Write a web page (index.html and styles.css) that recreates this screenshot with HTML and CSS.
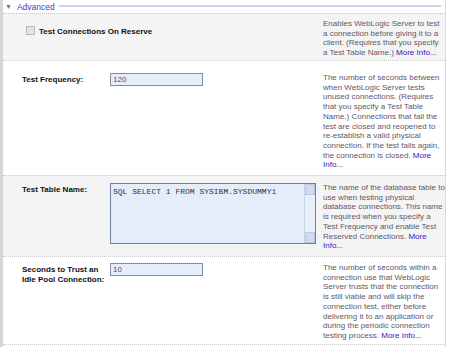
FILE: index.html
```html
<!DOCTYPE html>
<html lang="en">
<head>
  <meta charset="UTF-8">
  <title>Advanced</title>
  <link rel="stylesheet" href="styles.css">
</head>
<body>

  <div class="panel">
    <div class="section-head">
      <span class="arrow">&#9660;</span>
      <span class="section-title">Advanced</span>
      <span class="section-rule"></span>
    </div>

    <div class="row row-shade row-first">
      <div class="check-cell">
        <span class="checkbox"></span>
        <span class="label">Test Connections On Reserve</span>
      </div>
      <div class="help">Enables WebLogic Server to test a connection before giving it to a client. (Requires that you specify a Test Table Name.) <a href="#">More Info...</a></div>
    </div>

    <div class="row row-second">
      <div class="label">Test Frequency:</div>
      <div class="field"><input class="text-input" type="text" value="120"></div>
      <div class="help">The number of seconds between when WebLogic Server tests unused connections. (Requires that you specify a Test Table Name.) Connections that fail the test are closed and reopened to re-establish a valid physical connection. If the test fails again, the connection is closed. <a href="#">More Info...</a></div>
    </div>

    <div class="row row-shade row-third">
      <div class="label">Test Table Name:</div>
      <div class="field">
        <div class="area">
          <div class="area-text">SQL SELECT 1 FROM SYSIBM.SYSDUMMY1</div>
          <div class="scroll">
            <span class="scroll-btn"></span>
            <span class="scroll-btn"></span>
          </div>
        </div>
      </div>
      <div class="help">The name of the database table to use when testing physical database connections. This name is required when you specify a Test Frequency and enable Test Reserved Connections. <a href="#">More Info...</a></div>
    </div>

    <div class="row row-fourth">
      <div class="label">Seconds to Trust an Idle Pool Connection:</div>
      <div class="field"><input class="text-input" type="text" value="10"></div>
      <div class="help">The number of seconds within a connection use that WebLogic Server trusts that the connection is still viable and will skip the connection test, either before delivering it to an application or during the periodic connection testing process. <a href="#">More Info...</a></div>
    </div>
  </div>

</body>
</html>
```

FILE: styles.css
```css
body {
  margin: 0;
  background: #fff;
  font-family: "Liberation Sans", Arial, sans-serif;
  font-size: 8px;
  color: #222;
}
.panel {
  width: 442px;
  height: 347px;
  border-left: 3px solid #d6d6d6;
  border-right: 1px solid #dadada;
}
.section-head {
  display: flex;
  align-items: center;
  height: 13px;
  padding: 0 4px 0 2px;
}
.arrow {
  color: #5578b8;
  font-size: 7px;
  margin-right: 5px;
}
.section-title {
  color: #4b3acb;
  font-size: 8.5px;
  margin-right: 4px;
}
.section-rule {
  flex-grow: 1;
  border-top: 2px solid #c7d6ea;
  margin-top: -2px;
}
.row {
  display: grid;
  grid-template-columns: 88px 212px 123px;
  border-top: 1px dotted #c9c9c9;
  padding-left: 19px;
  box-sizing: border-box;
}
.row-shade {
  background: #f4f4f4;
}
.row-first {
  height: 47px;
  padding-top: 5px;
}
.row-second {
  height: 115px;
  padding-top: 12px;
}
.row-third {
  height: 81px;
  padding-top: 7px;
}
.row-fourth {
  height: 89px;
  padding-top: 6px;
  border-bottom: 1px dotted #c9c9c9;
}
.check-cell {
  grid-column: 1 / 3;
  display: flex;
  align-items: flex-start;
  padding-top: 6px;
  padding-left: 4px;
}
.checkbox {
  width: 7px;
  height: 7px;
  border: 1px solid #b8b8b8;
  background: #e4e4e4;
  margin-right: 4px;
  margin-top: 1px;
}
.label {
  font-weight: bold;
  color: #111;
  line-height: 10px;
  padding-top: 2px;
  padding-right: 2px;
}
.text-input {
  display: block;
  width: 93px;
  height: 13px;
  box-sizing: border-box;
  border: 1px solid #7d8db0;
  background: #e5edfa;
  color: #6a3a7a;
  font-family: "Liberation Sans", Arial, sans-serif;
  font-size: 8px;
  padding: 0 2px;
  margin: 0;
  outline: none;
}
.area {
  display: flex;
  width: 206px;
  height: 61px;
  box-sizing: border-box;
  border: 1px solid #6f7fa3;
  background: #e5edfa;
}
.area-text {
  flex-grow: 1;
  font-family: "Liberation Mono", "Courier New", monospace;
  font-size: 8px;
  color: #333;
  padding: 3px 2px;
}
.scroll {
  width: 10px;
  display: flex;
  flex-direction: column;
  justify-content: space-between;
  border-left: 1px solid #c9d4e6;
  background: #e8eef8;
}
.scroll-btn {
  height: 9px;
  background: #cfdcee;
  border: 1px solid #b9c8e0;
}
.help {
  color: #615868;
  line-height: 9.7px;
  padding-left: 1px;
}
.help a {
  color: #3a12c8;
  text-decoration: none;
}
```
